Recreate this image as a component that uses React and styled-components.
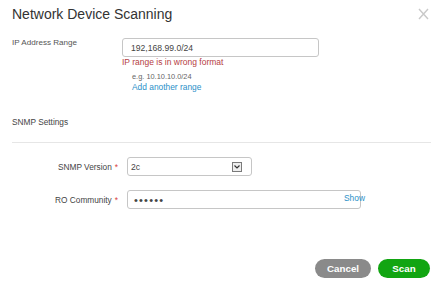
import React from "react";
import styled, { createGlobalStyle } from "styled-components";

const GlobalStyle = createGlobalStyle`
  body {
    margin: 0;
    background: #fff;
    font-family: "Liberation Sans", Arial, sans-serif;
  }
`;

const Dialog = styled.div`
  width: 441px;
  height: 283px;
  box-sizing: border-box;
  padding: 0 10px 0 12px;
  background: #fff;
`;

const Header = styled.div`
  height: 28px;
  display: flex;
  align-items: center;
  justify-content: space-between;
`;

const Title = styled.h1`
  margin: 0;
  font-size: 14px;
  font-weight: normal;
  color: #333;
  line-height: 16px;
`;

const CloseButton = styled.button`
  border: 0;
  background: none;
  padding: 0;
  margin-right: 2px;
  width: 11px;
  height: 12px;
  display: flex;
  cursor: pointer;
`;

const RangeRow = styled.div`
  margin-top: 10px;
  display: grid;
  grid-template-columns: 110px 197px;
`;

const Label = styled.label`
  font-size: 8.1px;
  line-height: 10px;
  color: #555;
`;

const Field = styled.div`
  display: flex;
  flex-direction: column;
`;

const TextInput = styled.input`
  box-sizing: border-box;
  width: ${(p) => p.$width}px;
  height: 19px;
  margin: 0;
  padding: 0 0 0 ${(p) => (p.$masked ? 6 : 8)}px;
  border: 1px solid #c6c6c6;
  border-radius: 3px;
  font-family: inherit;
  font-size: ${(p) => (p.$masked ? 11 : 8.6)}px;
  letter-spacing: ${(p) => (p.$masked ? "1.2px" : "normal")};
  color: #444;
  outline: none;
  background: #fff;
`;

const ErrorText = styled.div`
  font-size: 8.5px;
  line-height: 10px;
  color: #b5403f;
`;

const Hints = styled.div`
  margin-top: 5px;
  padding-left: 10px;
  display: flex;
  flex-direction: column;
`;

const HintText = styled.div`
  font-size: 7.4px;
  line-height: 10px;
  color: #666;
`;

const LinkText = styled.a`
  font-size: 8.4px;
  line-height: 10px;
  color: #2a90c8;
  text-decoration: none;
  cursor: pointer;
`;

const SectionTitle = styled.div`
  margin-top: 25px;
  font-size: 8.3px;
  line-height: 10px;
  color: #444;
`;

const Divider = styled.hr`
  margin: 15px 0 0;
  border: 0;
  border-top: 1px solid #e6e6e6;
`;

const FormGrid = styled.div`
  margin-top: 14px;
  display: grid;
  grid-template-columns: 106px auto;
  column-gap: 9px;
  row-gap: 14px;
  align-items: center;
`;

const FormLabel = styled.label`
  text-align: right;
  font-size: 8.3px;
  color: #444;
  white-space: nowrap;
`;

const Required = styled.span`
  color: #d9413f;
  margin-left: 3px;
`;

const Control = styled.div`
  position: relative;
  display: flex;
`;

const SelectBox = styled.div`
  box-sizing: border-box;
  width: 125px;
  height: 19px;
  border: 1px solid #c6c6c6;
  border-radius: 3px;
  padding: 0 9px 0 3px;
  display: flex;
  align-items: center;
  justify-content: space-between;
  font-size: 8.6px;
  color: #444;
`;

const ArrowBox = styled.span`
  box-sizing: border-box;
  width: 10px;
  height: 10px;
  border: 1px solid #7a7a7a;
  background: #eee;
  display: flex;
  align-items: center;
  justify-content: center;
`;

const ShowLink = styled.a`
  position: absolute;
  left: 217px;
  top: 3px;
  font-size: 8.4px;
  color: #2a90c8;
  cursor: pointer;
`;

const Footer = styled.div`
  margin-top: 50px;
  padding-right: 1px;
  display: flex;
  justify-content: flex-end;
  gap: 7px;
`;

const Button = styled.button`
  height: 19px;
  width: ${(p) => p.$width}px;
  border: 0;
  border-radius: 10px;
  padding: 0;
  background: ${(p) => (p.$primary ? "#12a512" : "#8a8a8a")};
  color: #fff;
  font-family: inherit;
  font-weight: bold;
  font-size: 9.8px;
  cursor: pointer;
`;

export default function App() {
  return (
    <>
      <GlobalStyle />
      <Dialog>
        <Header>
          <Title>Network Device Scanning</Title>
          <CloseButton aria-label="Close">
            <svg width="11" height="12" viewBox="0 0 11 12">
              <path d="M1 1 L10 11 M10 1 L1 11" stroke="#c9c9c9" strokeWidth="1.4" fill="none" />
            </svg>
          </CloseButton>
        </Header>

        <RangeRow>
          <Label>IP Address Range</Label>
          <Field>
            <TextInput $width={197} defaultValue="192,168.99.0/24" />
            <ErrorText>IP range is in wrong format</ErrorText>
            <Hints>
              <HintText>e.g. 10.10.10.0/24</HintText>
              <LinkText>Add another range</LinkText>
            </Hints>
          </Field>
        </RangeRow>

        <SectionTitle>SNMP Settings</SectionTitle>
        <Divider />

        <FormGrid>
          <FormLabel>
            SNMP Version<Required>*</Required>
          </FormLabel>
          <Control>
            <SelectBox>
              <span>2c</span>
              <ArrowBox>
                <svg width="6" height="4" viewBox="0 0 6 4">
                  <path d="M0.5 0.5 L3 3 L5.5 0.5" stroke="#333" strokeWidth="1.2" fill="none" />
                </svg>
              </ArrowBox>
            </SelectBox>
          </Control>

          <FormLabel>
            RO Community<Required>*</Required>
          </FormLabel>
          <Control>
            <TextInput $width={234} $masked type="password" defaultValue="abcdef" />
            <ShowLink>Show</ShowLink>
          </Control>
        </FormGrid>

        <Footer>
          <Button $width={56}>Cancel</Button>
          <Button $width={52} $primary>
            Scan
          </Button>
        </Footer>
      </Dialog>
    </>
  );
}
